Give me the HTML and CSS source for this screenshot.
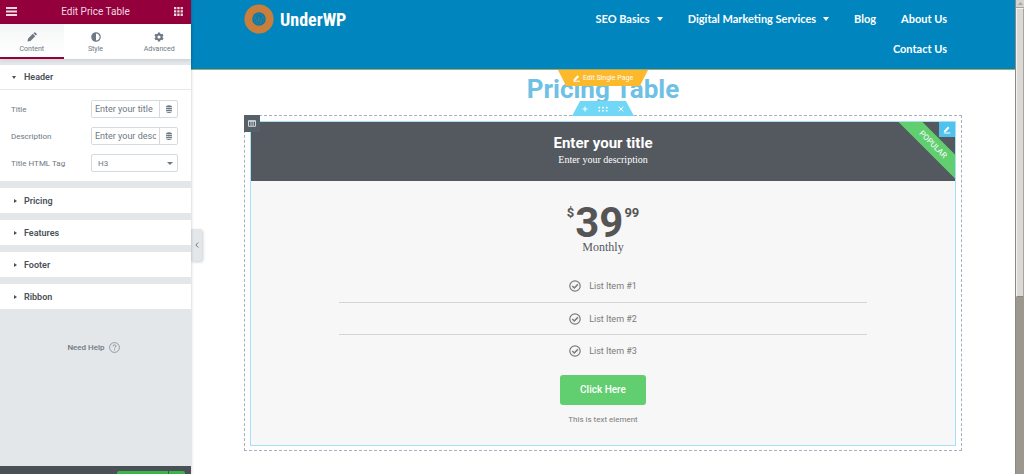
FILE: index.html
```html
<!DOCTYPE html>
<html lang="en">
<head>
    <meta charset="UTF-8">
    <title>Edit Price Table</title>
    <link rel="stylesheet" href="styles.css">
</head>
<body>
<div class="editor">
    <aside class="panel">
        <div class="panel-top">
            <button class="icon-btn" aria-label="Menu">
                <svg width="11" height="9" viewBox="0 0 11 9" fill="currentColor"><path d="M0 0h11v2H0zM0 3.500h11v2H0zM0 7h11v2H0z"/></svg>
            </button>
            <h2>Edit Price Table</h2>
            <button class="icon-btn" aria-label="Widgets">
                <svg width="9" height="9" viewBox="0 0 9 9" fill="currentColor"><path d="M0 0h2.300v2.300H0zM3.300 0h2.300v2.300H3.300zM6.600 0h2.300v2.300H6.600zM0 3.300h2.300v2.300H0zM3.300 3.300h2.300v2.300H3.300zM6.600 3.300h2.300v2.300H6.600zM0 6.600h2.300v2.300H0zM3.300 6.600h2.300v2.300H3.300zM6.600 6.600h2.300v2.300H6.600z"/></svg>
            </button>
        </div>
        <nav class="tabs">
            <button class="tab active">
                <svg width="10" height="10" viewBox="0 0 10 10" fill="currentColor"><path d="M0.500 9.500l0.600-3L5.800 1.800l2.400 2.400L3.500 8.900zM6.400 1.200l0.800-0.800q0.500-0.500 1 0l1.400 1.400q0.500 0.500 0 1l-0.800 0.800z"/></svg>
                <span>Content</span>
            </button>
            <button class="tab">
                <svg width="10" height="10" viewBox="0 0 10 10"><circle cx="5" cy="5" r="4.200" fill="none" stroke="currentColor" stroke-width="1.200"/><path d="M5 1a4 4 0 0 0 0 8z" fill="currentColor"/></svg>
                <span>Style</span>
            </button>
            <button class="tab">
                <svg width="10" height="10" viewBox="0 0 10 10"><circle cx="5" cy="5" r="2.600" fill="none" stroke="currentColor" stroke-width="2"/><path d="M5 0.400v2M5 7.600v2M1 2.700l1.700 1M7.300 6.300l1.700 1M1 7.300l1.700-1M7.300 3.700l1.700-1" stroke="currentColor" stroke-width="2.200"/></svg>
                <span>Advanced</span>
            </button>
        </nav>
        <div class="sections">
            <section class="section">
                <button class="section-title open">Header</button>
                <div class="controls">
                    <div class="control">
                        <label for="title">Title</label>
                        <div class="field">
                            <input type="text" id="title" value="Enter your title">
                            <button class="dynamic" aria-label="Dynamic title">
                                <svg width="6" height="8" viewBox="0 0 6 8" fill="currentColor"><path d="M0 1.200q3-2 6 0v0.600q-3 1.200-6 0zM0 2.500q3 1.200 6 0v1.300q-3 1.200-6 0zM0 4.500q3 1.200 6 0v1.200q-3 1.200-6 0zM0 6.400q3 1.200 6 0v0.600q-3 1.800-6 0z"/></svg>
                            </button>
                        </div>
                    </div>
                    <div class="control">
                        <label for="description">Description</label>
                        <div class="field">
                            <input type="text" id="description" value="Enter your description">
                            <button class="dynamic" aria-label="Dynamic description">
                                <svg width="6" height="8" viewBox="0 0 6 8" fill="currentColor"><path d="M0 1.200q3-2 6 0v0.600q-3 1.200-6 0zM0 2.500q3 1.200 6 0v1.300q-3 1.200-6 0zM0 4.500q3 1.200 6 0v1.200q-3 1.200-6 0zM0 6.400q3 1.200 6 0v0.600q-3 1.800-6 0z"/></svg>
                            </button>
                        </div>
                    </div>
                    <div class="control">
                        <label for="tag">Title HTML Tag</label>
                        <div class="field select">
                            <select id="tag">
                                <option>H3</option>
                            </select>
                        </div>
                    </div>
                </div>
            </section>
            <section class="section"><button class="section-title">Pricing</button></section>
            <section class="section"><button class="section-title">Features</button></section>
            <section class="section"><button class="section-title">Footer</button></section>
            <section class="section"><button class="section-title">Ribbon</button></section>
            <a class="help" href="#">Need Help
                <svg width="11" height="11" viewBox="0 0 11 11" fill="none" stroke="currentColor"><circle cx="5.500" cy="5.500" r="4.900" stroke-width="0.900"/><path d="M4 4.300q0-1.400 1.500-1.400t1.500 1.300q0 0.700-0.800 1.100t-0.700 1.200M5.500 7.400v1"/></svg>
            </a>
        </div>
        <div class="panel-bottom">
            <button class="publish" aria-label="Update"></button>
            <button class="publish-more" aria-label="Save options"></button>
        </div>
    </aside>

    <main class="preview">
        <button class="collapse" aria-label="Hide panel">
            <svg width="4" height="6" viewBox="0 0 4 6" fill="none" stroke="currentColor"><path d="M3.300 0.500L0.800 3l2.500 2.500"/></svg>
        </button>
        <header class="site-header">
            <div class="container">
                <a class="logo" href="#">
                    <svg width="30" height="30" viewBox="0 0 30 30">
                        <circle cx="15" cy="15" r="14.600" fill="#c97e3b"/>
                        <circle cx="15" cy="15" r="6.800" fill="#087aa8"/>
                        <circle cx="15" cy="15" r="5" fill="none" stroke="#3b7f96" stroke-width="0.700"/>
                        <path d="M11 12.500l2.500 6 1.800-5M14 12.500l2.500 6 2-6" fill="none" stroke="#3b7f96"/>
                    </svg>
                    <span>UnderWP</span>
                </a>
                <nav class="menu">
                    <a class="has-sub" href="#">SEO Basics</a>
                    <a class="has-sub" href="#">Digital Marketing Services</a>
                    <a href="#">Blog</a>
                    <a href="#">About Us</a>
                    <a href="#">Contact Us</a>
                </nav>
            </div>
        </header>

        <div class="page">
            <button class="edit-page">
                <svg width="7" height="7" viewBox="0 0 7 7" fill="currentColor"><path d="M0.700 4.200L4.600 0.300l1.500 1.500L2.200 5.700 0.500 6zM3.500 5.800h3.200v0.900H0.200v-0.400z"/></svg>
                Edit Single Page
            </button>
            <h1>Pricing Table</h1>

            <section class="elementor-section">
                <div class="section-tools">
                    <button aria-label="Add section"><svg width="6" height="6" viewBox="0 0 6 6" stroke="currentColor"><path d="M3 0.500v5M0.500 3h5"/></svg></button>
                    <button aria-label="Edit section"><svg width="10" height="6" viewBox="0 0 10 6" fill="currentColor"><path d="M0.500 0.800h1.600v1.600H0.500zM4.200 0.800h1.600v1.600H4.200zM7.900 0.800h1.600v1.600H7.900zM0.500 3.900h1.600v1.600H0.500zM4.200 3.900h1.600v1.600H4.200zM7.900 3.900h1.600v1.600H7.900z"/></svg></button>
                    <button aria-label="Delete section"><svg width="6" height="6" viewBox="0 0 6 6" stroke="currentColor"><path d="M0.700 0.700l4.600 4.600M5.300 0.700L0.700 5.300"/></svg></button>
                </div>
                <button class="column-handle" aria-label="Edit column">
                    <svg width="8" height="7" viewBox="0 0 8 7" fill="none" stroke="currentColor"><path d="M0.500 0.700h7v5.600h-7zM3 1v5M5.200 1v5M0.500 1.200h7" stroke-width="0.900"/></svg>
                </button>

                <div class="price-table">
                    <div class="table-header">
                        <h3>Enter your title</h3>
                        <p>Enter your description</p>
                        <div class="ribbon"><span>POPULAR</span></div>
                    </div>
                    <button class="widget-edit" aria-label="Edit widget">
                        <svg width="8" height="8" viewBox="0 0 8 8" fill="currentColor"><path d="M1 4.800L5 0.600l1.400 1.300-3.900 4.300L0.800 6.500zM3.500 6.500h3.800v1H0.800v-0.600z"/></svg>
                    </button>
                    <div class="price">
                        <span class="currency">$</span>
                        <span class="amount">39</span>
                        <span class="cents">99</span>
                    </div>
                    <div class="period">Monthly</div>
                    <ul class="features">
                        <li><svg width="12" height="12" viewBox="0 0 12 12" fill="none" stroke="currentColor" stroke-width="1.200"><circle cx="6" cy="6" r="5.200"/><path d="M3.300 6l2 2 3.600-3.600" stroke-width="1.500"/></svg>List Item #1</li>
                        <li><svg width="12" height="12" viewBox="0 0 12 12" fill="none" stroke="currentColor" stroke-width="1.200"><circle cx="6" cy="6" r="5.200"/><path d="M3.300 6l2 2 3.600-3.600" stroke-width="1.500"/></svg>List Item #2</li>
                        <li><svg width="12" height="12" viewBox="0 0 12 12" fill="none" stroke="currentColor" stroke-width="1.200"><circle cx="6" cy="6" r="5.200"/><path d="M3.300 6l2 2 3.600-3.600" stroke-width="1.500"/></svg>List Item #3</li>
                    </ul>
                    <div class="table-footer">
                        <a class="buy" href="#">Click Here</a>
                        <p>This is text element</p>
                    </div>
                </div>
            </section>
        </div>
    </main>

    <div class="scrollbar">
        <div class="arrow">
            <svg width="5" height="3" viewBox="0 0 5 3" fill="#aaa69f"><path d="M2.500 0L5 3H0z"/></svg>
        </div>
        <div class="thumb"></div>
    </div>
</div>
</body>
</html>
```
FILE: styles.css
```css
*, *::before, *::after{
    box-sizing: border-box;
}
body{
    margin: 0;
    font-family: Roboto, "Liberation Sans", sans-serif;
    background: #fff;
}
h1, h2, h3, p, ul{
    margin: 0;
    padding: 0;
}
button{
    margin: 0;
    padding: 0;
    border: 0;
    background: none;
    color: inherit;
    font: inherit;
}
a{
    color: inherit;
    text-decoration: none;
}
svg{
    display: block;
    flex-shrink: 0;
}
.editor{
    display: flex;
    height: 100vh;
    overflow: hidden;
}

/* left panel */
.panel{
    display: flex;
    flex-direction: column;
    flex: 0 0 191px;
    background: #e3e7ea;
    color: #6d7882;
    font-size: 8px;
    box-shadow: 0 0 3px rgba(0,0,0,.25);
    z-index: 1;
}
.panel-top{
    display: flex;
    align-items: center;
    justify-content: space-between;
    height: 24px;
    padding: 0 8px 1px 6px;
    background: #93003c;
    color: #f0d9e2;
}
.panel-top h2{
    font-size: 10px;
    font-weight: 400;
}
.tabs{
    display: flex;
    height: 35px;
    background: #fff;
    box-shadow: 0 1px 4px rgba(0,0,0,.12);
}
.tab{
    display: flex;
    flex: 1;
    flex-direction: column;
    align-items: center;
    gap: 2px;
    padding-top: 8px;
    font-size: 7px;
    line-height: 10px;
}
.tab.active{
    background: linear-gradient(#f5f6f7, #fff);
    border-bottom: 2px solid #93003c;
}
.sections{
    display: flex;
    flex-direction: column;
    flex: 1;
    gap: 7px;
    padding-top: 6px;
}
.section{
    background: #fff;
}
.section-title{
    display: flex;
    align-items: center;
    width: 100%;
    height: 25px;
    padding-left: 14px;
    color: #495157;
    font-size: 9px;
    font-weight: 600;
}
.section-title::before{
    content: "";
    margin-right: 7px;
    border: 2px solid transparent;
    border-left: 3px solid #495157;
    border-right: 0;
}
.section-title.open{
    padding-left: 12px;
    border-bottom: 1px solid #e6e9ec;
}
.section-title.open::before{
    margin-right: 8px;
    border: 2px solid transparent;
    border-top: 3px solid #495157;
    border-bottom: 0;
}
.controls{
    display: flex;
    flex-direction: column;
    gap: 9px;
    padding: 10px 13px 9px 11px;
}
.control{
    display: flex;
    align-items: center;
    justify-content: space-between;
}
.field{
    display: flex;
    width: 87px;
    height: 18px;
    border: 1px solid #d5dadf;
    border-radius: 2px;
    overflow: hidden;
}
.field input{
    flex: 1;
    min-width: 0;
    padding: 0 3px;
    border: 0;
    color: #6d7882;
    font: 9px Roboto, sans-serif;
}
.dynamic{
    display: flex;
    align-items: center;
    justify-content: center;
    width: 18px;
    border-left: 1px solid #d5dadf;
}
.select{
    position: relative;
}
.select select{
    width: 100%;
    padding: 0 6px;
    border: 0;
    background: none;
    appearance: none;
    color: #6d7882;
    font: 8px Roboto, sans-serif;
}
.select::after{
    content: "";
    position: absolute;
    right: 4px;
    top: 7px;
    border: 3px solid transparent;
    border-top-color: #6d7882;
    border-bottom: 0;
    pointer-events: none;
}
.help{
    display: flex;
    align-items: center;
    justify-content: center;
    gap: 4px;
    margin-top: 26px;
    padding-right: 4px;
    font-weight: 500;
}
.help svg{
    color: #88929b;
}
.panel-bottom{
    display: flex;
    justify-content: flex-end;
    gap: 1px;
    height: 8px;
    padding: 5px 6px 0 0;
    background: #495157;
}
.publish, .publish-more{
    width: 51px;
    background: #39b54a;
    border-radius: 2px 0 0 0;
}
.publish-more{
    width: 16px;
    border-radius: 0 2px 0 0;
}

/* preview */
.preview{
    position: relative;
    flex: 1;
    min-width: 0;
}
.collapse{
    position: absolute;
    left: 0;
    top: 229px;
    display: flex;
    align-items: center;
    justify-content: center;
    width: 11px;
    height: 32px;
    background: #e3e7ea;
    color: #6d7882;
    border-radius: 0 2px 2px 0;
    box-shadow: 1px 1px 3px rgba(0,0,0,.2);
}
.site-header{
    height: 70px;
    padding: 0 53px;
    background: #0085be;
    border-bottom: 1px solid #a5a860;
}
.container{
    display: flex;
    justify-content: space-between;
    padding-top: 4px;
}
.logo{
    display: flex;
    align-items: center;
    gap: 6px;
    height: 30px;
    color: #fff;
    font-family: "Roboto Condensed", Roboto, sans-serif;
    font-size: 18px;
    font-weight: 700;
}
.menu{
    display: flex;
    flex-wrap: wrap;
    justify-content: flex-end;
    width: 370px;
    margin-right: 15px;
    column-gap: 25px;
    color: #fff;
    font-family: Lato, "Open Sans", sans-serif;
    font-size: 11px;
    font-weight: 700;
    line-height: 30px;
}
.menu .has-sub{
    display: flex;
    align-items: center;
    gap: 7px;
}
.has-sub::after{
    content: "";
    border: 3px solid transparent;
    border-top: 4px solid #fff;
    border-bottom: 0;
}
.page{
    position: relative;
    padding: 4px 53px 0;
}
.page h1{
    color: #6ec1e4;
    font-size: 26px;
    font-weight: 700;
    line-height: 30px;
    text-align: center;
}
.edit-page{
    position: absolute;
    top: 0;
    left: 50%;
    display: flex;
    align-items: center;
    justify-content: center;
    gap: 3px;
    width: 90px;
    height: 16px;
    margin-left: -45px;
    background: #fcb92c;
    color: #fff;
    font-size: 7px;
    clip-path: polygon(0 0, 100% 0, 91% 100%, 9% 100%);
}
.elementor-section{
    position: relative;
    margin-top: 11px;
    padding: 5px 5px 4px;
    border: 1px dashed #a5b2bd;
}
.section-tools{
    position: absolute;
    bottom: 100%;
    left: 50%;
    display: flex;
    align-items: center;
    justify-content: center;
    gap: 10px;
    width: 62px;
    height: 15px;
    margin-left: -31px;
    background: #71d7f7;
    color: #fff;
    clip-path: polygon(13% 0, 87% 0, 100% 100%, 0 100%);
}
.column-handle{
    position: absolute;
    left: -1px;
    top: -1px;
    z-index: 1;
    display: flex;
    align-items: center;
    justify-content: center;
    width: 16px;
    height: 17px;
    background: #556068;
    color: #dfe3e6;
}
.price-table{
    position: relative;
    border: 1px solid #a5e0f8;
    background: #f7f7f7;
    text-align: center;
}
.table-header{
    position: relative;
    height: 59px;
    padding-top: 12px;
    background: #54595f;
    color: #fff;
    overflow: hidden;
}
.table-header h3{
    font-size: 15px;
    font-weight: 700;
    line-height: 18px;
}
.table-header p{
    font-family: "Roboto Slab", "Liberation Serif", serif;
    font-size: 10px;
    line-height: 16px;
}
.ribbon{
    position: absolute;
    top: 0;
    right: 0;
    width: 90px;
    height: 90px;
    overflow: hidden;
}
.ribbon span{
    position: absolute;
    top: 14px;
    right: -38px;
    width: 120px;
    background: #61ce70;
    font-size: 8px;
    line-height: 17px;
    transform: rotate(45deg);
}
.widget-edit{
    position: absolute;
    top: 0;
    right: 0;
    display: flex;
    align-items: center;
    justify-content: center;
    width: 16px;
    height: 15px;
    background: #4fc3ee;
    color: #fff;
}
.price{
    display: flex;
    justify-content: center;
    gap: 1px;
    margin-top: 25px;
    color: #555;
    font-size: 13px;
    font-weight: 700;
    line-height: 13px;
}
.price .amount{
    font-size: 42px;
    line-height: 34px;
}
.period{
    color: #54595f;
    font-family: "Roboto Slab", "Liberation Serif", serif;
    font-size: 12px;
    line-height: 14px;
}
.features{
    width: 75%;
    margin: 16px auto 0;
    list-style: none;
    color: #7a7a7a;
    font-size: 9px;
}
.features li{
    display: flex;
    align-items: center;
    justify-content: center;
    gap: 8px;
    height: 32px;
}
.features li + li{
    border-top: 1px solid #d5d5d5;
}
.table-footer{
    padding: 9px 0 19px;
    color: #7a7a7a;
    font-size: 8px;
}
.buy{
    display: inline-block;
    padding: 0 20px;
    background: #61ce70;
    border-radius: 3px;
    color: #fff;
    font-size: 10px;
    font-weight: 500;
    line-height: 30px;
}
.table-footer p{
    margin-top: 9px;
    line-height: 12px;
}

/* outer scrollbar */
.scrollbar{
    flex: 0 0 9px;
    background: #9c988f;
    border-left: 1px solid #8d8981;
}
.arrow{
    display: flex;
    align-items: center;
    justify-content: center;
    height: 8px;
    background: #d6d4cf;
    border-bottom: 1px solid #a8a49c;
}
.thumb{
    height: 61%;
    background: #dbd9d5;
    border: 1px solid #f3f2f0;
    border-right-color: #a8a49c;
    border-bottom-color: #8d8981;
}
```
